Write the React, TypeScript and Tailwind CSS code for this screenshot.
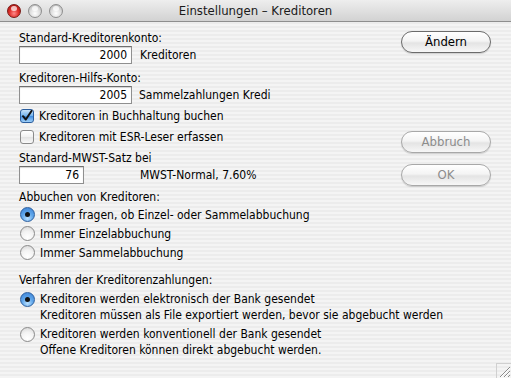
import React from 'react';

const font = "font-['Lucida_Grande','DejaVu_Sans_Condensed','DejaVu_Sans',sans-serif] [font-stretch:condensed]";

function Light({ color }: { color: 'red' | 'grey' }) {
  const cls =
    color === 'red'
      ? 'bg-[radial-gradient(circle_at_50%_70%,#ff8a8a_0%,#e0302b_45%,#9c0d0a_100%)] border-[#7a1a16]'
      : 'bg-[radial-gradient(circle_at_50%_70%,#ffffff_0%,#dcdcdc_50%,#a9a9a9_100%)] border-[#8e8e8e]';
  return (
    <div className={`relative h-[14px] w-[14px] rounded-full border ${cls}`}>
      <div className="absolute left-[3px] top-[1px] h-[5px] w-[6px] rounded-full bg-white/70" />
    </div>
  );
}

function Field({ value, width }: { value: string; width: string }) {
  return (
    <div
      className={`${width} flex h-[18px] items-center justify-end border border-[#8f8f8f] border-t-[#6f6f6f] bg-white pr-[4px] text-[12px] leading-none text-black shadow-[inset_0_1px_1px_rgba(0,0,0,0.18)]`}
    >
      {value}
    </div>
  );
}

function Checkbox({ checked, label }: { checked?: boolean; label: string }) {
  return (
    <div className="flex h-[20px] items-center">
      <div
        className={`ml-[1px] flex h-[14px] w-[14px] items-center justify-center rounded-[3px] border ${
          checked
            ? 'border-[#2b5e9e] bg-[linear-gradient(to_bottom,#c8e2fa_0%,#6fb1ec_50%,#3f8be0_51%,#9fd0f8_100%)]'
            : 'border-[#8a8a8a] bg-[linear-gradient(to_bottom,#ffffff_0%,#f0f0f0_50%,#e2e2e2_51%,#fafafa_100%)]'
        }`}
      >
        {checked && (
          <svg width="12" height="12" viewBox="0 0 12 12">
            <path d="M2 6.2 L4.8 9.5 L10.5 1" fill="none" stroke="#111" strokeWidth="2" strokeLinecap="round" strokeLinejoin="round" />
          </svg>
        )}
      </div>
      <span className="ml-[5px] whitespace-nowrap">{label}</span>
    </div>
  );
}

function Radio({ checked, label }: { checked?: boolean; label: string }) {
  return (
    <div className="flex h-[19px] items-center">
      <RadioDot checked={checked} />
      <span className="ml-[5px] whitespace-nowrap">{label}</span>
    </div>
  );
}

function RadioDot({ checked }: { checked?: boolean }) {
  return (
    <div
      className={`ml-[1px] flex h-[15px] w-[15px] shrink-0 items-center justify-center rounded-full border ${
        checked
          ? 'border-[#2b5e9e] bg-[radial-gradient(circle_at_50%_80%,#b9e0ff_0%,#5fa6ea_45%,#3b7fd3_100%)]'
          : 'border-[#8a8a8a] bg-[radial-gradient(circle_at_50%_80%,#ffffff_0%,#f3f3f3_50%,#d2d2d2_100%)]'
      }`}
    >
      {checked && <div className="h-[5px] w-[5px] rounded-full bg-[#111]" />}
    </div>
  );
}

function AquaButton({ label, disabled }: { label: string; disabled?: boolean }) {
  return (
    <div
      className={`flex h-[22px] w-[90px] items-center justify-center rounded-full border ${
        disabled ? 'border-[#a8a8a8] text-[#8c8c8c]' : 'border-[#6b6b6b] text-black'
      } bg-[linear-gradient(to_bottom,#ffffff_0%,#f4f4f4_45%,#e4e4e4_55%,#f7f7f7_100%)] text-[13px] shadow-[0_1px_1px_rgba(0,0,0,0.15)]`}
    >
      {label}
    </div>
  );
}

export default function App() {
  return (
    <div className={`${font} flex h-[378px] w-[511px] flex-col overflow-hidden text-[12px] text-black`}>
      <div className="relative flex h-[22px] shrink-0 items-center border-b border-[#8e8e8e] bg-[linear-gradient(to_bottom,#eeeeee,#d2d2d2)]">
        <div className="ml-[7px] flex gap-[7px]">
          <Light color="red" />
          <Light color="grey" />
          <Light color="grey" />
        </div>
        <div className="absolute inset-x-0 top-0 flex h-[21px] items-center justify-center text-[13px] text-[#1a1a1a]">
          Einstellungen – Kreditoren
        </div>
      </div>

      <div className="relative flex flex-1 bg-[repeating-linear-gradient(to_bottom,#ececec_0px,#ececec_2px,#f4f4f4_2px,#f4f4f4_4px)] pl-[19px]">
        <div className="flex min-w-0 flex-1 flex-col">
          <div className="mt-[8px] h-[16px] leading-[16px]">Standard-Kreditorenkonto:</div>
          <div className="flex items-center">
            <Field value="2000" width="w-[113px]" />
            <span className="ml-[8px]">Kreditoren</span>
          </div>
          <div className="mt-[6px] h-[16px] leading-[16px]">Kreditoren-Hilfs-Konto:</div>
          <div className="flex items-center">
            <Field value="2005" width="w-[113px]" />
            <span className="ml-[7px] whitespace-nowrap">Sammelzahlungen Kredi</span>
          </div>
          <div className="mt-[2px]">
            <Checkbox checked label="Kreditoren in Buchhaltung buchen" />
          </div>
          <div className="mt-[1px]">
            <Checkbox label="Kreditoren mit ESR-Leser erfassen" />
          </div>
          <div className="mt-[3px] h-[16px] leading-[16px]">Standard-MWST-Satz bei</div>
          <div className="flex items-center">
            <Field value="76" width="w-[65px]" />
            <span className="ml-[56px] whitespace-nowrap">MWST-Normal, 7.60%</span>
          </div>
          <div className="mt-[5px] h-[16px] leading-[16px]">Abbuchen von Kreditoren:</div>
          <div>
            <Radio checked label="Immer fragen, ob Einzel- oder Sammelabbuchung" />
            <Radio label="Immer Einzelabbuchung" />
            <Radio label="Immer Sammelabbuchung" />
          </div>
          <div className="mt-[10px] h-[16px] leading-[16px]">Verfahren der Kreditorenzahlungen:</div>
          <div className="mt-[3px] flex">
            <div className="mt-[1px]">
              <RadioDot checked />
            </div>
            <div className="ml-[5px] flex flex-col whitespace-nowrap">
              <span className="h-[16px] leading-[16px]">Kreditoren werden elektronisch der Bank gesendet</span>
              <span className="h-[16px] leading-[16px]">Kreditoren müssen als File exportiert werden, bevor sie abgebucht werden</span>
            </div>
          </div>
          <div className="mt-[3px] flex">
            <div className="mt-[1px]">
              <RadioDot />
            </div>
            <div className="ml-[5px] flex flex-col whitespace-nowrap">
              <span className="h-[16px] leading-[16px]">Kreditoren werden konventionell der Bank gesendet</span>
              <span className="h-[17px] leading-[17px]">Offene Kreditoren können direkt abgebucht werden.</span>
            </div>
          </div>
        </div>

        <div className="mr-[20px] flex w-[90px] shrink-0 flex-col">
          <div className="mt-[9px]">
            <AquaButton label="Ändern" />
          </div>
          <div className="mt-[78px]">
            <AquaButton label="Abbruch" disabled />
          </div>
          <div className="mt-[11px]">
            <AquaButton label="OK" disabled />
          </div>
        </div>

        <div className="absolute bottom-0 right-0 h-[15px] w-[15px] border-l border-t border-[#d0d0d0]">
          <svg width="14" height="14" viewBox="0 0 14 14">
            <path d="M3 13 L13 3 M7 13 L13 7 M11 13 L13 11" stroke="#8a8a8a" strokeWidth="1" />
            <path d="M4 13 L13 4 M8 13 L13 8" stroke="#ffffff" strokeWidth="1" />
          </svg>
        </div>
      </div>
    </div>
  );
}
